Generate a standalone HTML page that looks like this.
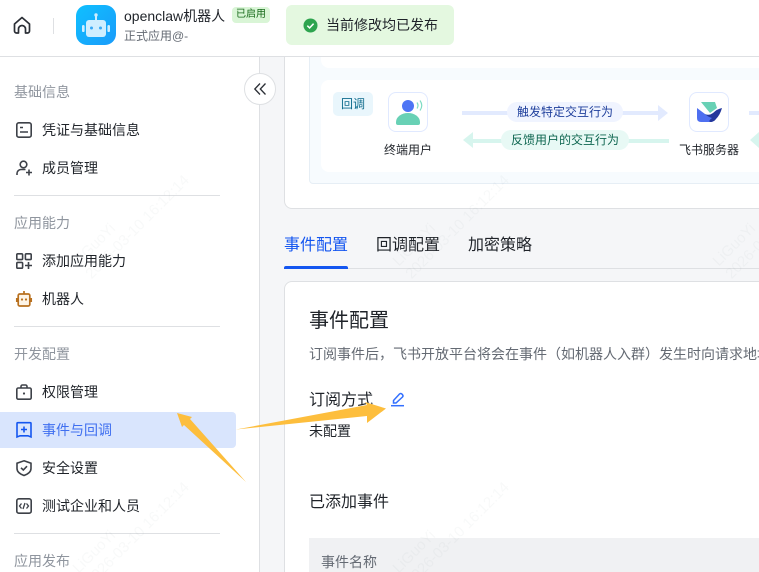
<!DOCTYPE html>
<html><head><meta charset="utf-8"><style>
*{box-sizing:border-box}
html,body{margin:0;padding:0;width:759px;height:572px;overflow:hidden;background:#f5f6f8;font-family:"Liberation Sans","Noto Sans CJK SC",sans-serif;color:#1f2329}
#r{position:relative;width:759px;height:572px;overflow:hidden;background:#f5f6f8}
.a{position:absolute;white-space:nowrap}
.g{font-size:14px;color:#8f959e;left:14px;line-height:18px}
.i{font-size:14px;left:42px;line-height:20px;color:#1f2329}
.d{left:14px;width:206px;height:1px;background:#dee0e3}
svg{position:absolute;overflow:visible}
.s{fill:none;stroke:#3d4148;stroke-width:1.6}
.wm{position:absolute;color:rgba(80,90,110,.04);font-size:15px;line-height:18px;transform:rotate(-45deg);transform-origin:0 100%;white-space:nowrap}
</style></head><body><div id="r">
<!-- main area -->
<div class="a" style="left:284px;top:50px;width:490px;height:159px;background:#fff;border:1px solid #dee0e3;border-radius:8px"></div>
<div class="a" style="left:309px;top:50px;width:470px;height:134px;background:#f7fbfe;border:1px solid #e6eef5;border-radius:4px"></div>
<div class="a" style="left:321px;top:50px;width:450px;height:18px;background:#fff;border-radius:8px"></div>
<div class="a" style="left:321px;top:80px;width:450px;height:92px;background:#fff;border-radius:8px"></div>
<div class="a" style="left:333px;top:92px;width:40px;height:24px;background:#e9f6fc;border-radius:5px;font-size:12px;line-height:24px;text-align:center;color:#0e6b8c">回调</div>
<div class="a" style="left:388px;top:92px;width:40px;height:40px;background:#fff;border:1px solid #e0e9ff;border-radius:8px"></div>
<svg style="left:388px;top:92px" width="40" height="40" viewBox="0 0 40 40"><circle cx="20" cy="14" r="6" fill="#4e75f5"/><path d="M8 30a12 9 0 0 1 24 0v1a2 2 0 0 1-2 2H10a2 2 0 0 1-2-2z" fill="#68d1b5"/><path d="M29 10.500q2 3 0 6M32 8.500q3.500 5 0 10" fill="none" stroke="#7fdcc4" stroke-width="1.200"/></svg>
<div class="a" style="left:384px;top:141px;font-size:12px;line-height:18px;color:#1f2329">终端用户</div>
<div class="a" style="left:462px;top:111px;width:196px;height:4px;background:#e2eafe"></div>
<svg style="left:658px;top:105px" width="10" height="16"><path d="M0 0L10 8L0 16z" fill="#e2eafe"/></svg>
<div class="a" style="left:507px;top:102px;width:116px;height:20px;background:#f0f4ff;border-radius:10px;font-size:12px;line-height:20px;text-align:center;color:#1f3f9c">触发特定交互行为</div>
<svg style="left:463px;top:132px" width="10" height="16"><path d="M10 0L0 8L10 16z" fill="#d7f5ee"/></svg>
<div class="a" style="left:473px;top:139px;width:196px;height:4px;background:#d7f5ee"></div>
<div class="a" style="left:501px;top:130px;width:128px;height:20px;background:#e8f9f5;border-radius:10px;font-size:12px;line-height:20px;text-align:center;color:#0e6650">反馈用户的交互行为</div>
<div class="a" style="left:689px;top:92px;width:40px;height:40px;background:#fff;border:1px solid #e0e9ff;border-radius:8px"></div>
<svg style="left:689px;top:92px" width="40" height="40" viewBox="0 0 40 40"><path d="M12 10H26L28 16 21 21z" fill="#68d1b5"/><path d="M8 16L16 22Q21 26 27 26L23 30H12Q8 30 8 26z" fill="#4e6ff0"/><path d="M16 22Q20 24 24 21 28 17 33 16 31 23 27 27 25 30 21 30 19 29 23 26 19 25 16 22z" fill="#24389c"/></svg>
<div class="a" style="left:679px;top:141px;font-size:12px;line-height:18px;color:#1f2329">飞书服务器</div>
<div class="a" style="left:749px;top:111px;width:10px;height:4px;background:#e2eafe"></div>
<svg style="left:750px;top:132px" width="9" height="16"><path d="M9 0L0 8L9 16z" fill="#d7f5ee"/></svg>
<!-- tabs -->
<div class="a" style="left:284px;top:236px;font-size:16px;line-height:20px;color:#1456f0">事件配置</div>
<div class="a" style="left:376px;top:236px;font-size:16px;line-height:20px">回调配置</div>
<div class="a" style="left:468px;top:236px;font-size:16px;line-height:20px">加密策略</div>
<div class="a" style="left:284px;top:268px;width:475px;height:1px;background:#dee0e3"></div>
<div class="a" style="left:284px;top:266px;width:64px;height:3px;background:#1456f0;border-radius:2px 2px 0 0"></div>
<!-- card -->
<div class="a" style="left:284px;top:281px;width:490px;height:300px;background:#fff;border:1px solid #dee0e3;border-radius:8px"></div>
<div class="a" style="left:309px;top:308px;font-size:20px;line-height:26px">事件配置</div>
<div class="a" style="left:309px;top:344px;font-size:14px;line-height:20px;color:#646a73">订阅事件后，飞书开放平台将会在事件（如机器人入群）发生时向请求地址</div>
<div class="a" style="left:309px;top:390px;font-size:16px;line-height:22px">订阅方式</div>
<svg style="left:390px;top:392px" width="16" height="16" viewBox="0 0 16 16"><path d="M3.500 11V8.500L9.500 2Q10.500 1 11.800 2L12.500 2.700Q13.500 3.800 12.500 5L6 11z" fill="none" stroke="#3370ff" stroke-width="1.500"/><path d="M1 13.700H14" stroke="#3370ff" stroke-width="1.500"/></svg>
<div class="a" style="left:309px;top:421px;font-size:14px;line-height:20px">未配置</div>
<div class="a" style="left:309px;top:492px;font-size:16px;line-height:22px">已添加事件</div>
<div class="a" style="left:309px;top:538px;width:450px;height:34px;background:#f0f1f3"></div>
<div class="a" style="left:321px;top:552px;font-size:14px;line-height:20px;color:#646a73">事件名称</div>
<!-- header -->
<div class="a" style="left:0;top:0;width:759px;height:57px;background:#fff;border-bottom:1px solid #dee0e3"></div>
<svg style="left:12px;top:15px" width="20" height="20" viewBox="0 0 20 20"><path d="M6.500 18H4.500a2 2 0 0 1-2-2V9L10 2.500 17.500 9v7a2 2 0 0 1-2 2h-2v-4a3.500 3.500 0 0 0-7 0z" fill="none" stroke="#2b2f36" stroke-width="1.700" stroke-linejoin="round"/></svg>
<div class="a" style="left:53px;top:18px;width:1px;height:16px;background:#dee0e3"></div>
<div class="a" style="left:76px;top:5px;width:40px;height:40px;border-radius:11px;background:linear-gradient(135deg,#0fc0ff,#1a9bfa)"></div>
<svg style="left:76px;top:5px" width="40" height="40" viewBox="0 0 40 40"><rect x="10" y="15" width="20" height="17" rx="3" fill="#cfeeff"/><rect x="19" y="10" width="2" height="6" fill="#cfeeff"/><circle cx="20" cy="10" r="1.700" fill="#cfeeff"/><rect x="6" y="20" width="2.600" height="7" rx="1.300" fill="#cfeeff"/><rect x="31.400" y="20" width="2.600" height="7" rx="1.300" fill="#cfeeff"/><circle cx="15.500" cy="23" r="1.500" fill="#3aa9f5"/><circle cx="24.500" cy="23" r="1.500" fill="#3aa9f5"/></svg>
<div class="a" style="left:124px;top:6px;font-size:14px;line-height:20px;color:#1f2329">openclaw机器人</div>
<div class="a" style="left:232px;top:7px;width:38px;height:16px;background:#d9f5d6;border-radius:4px;font-size:10px;line-height:16px;text-align:center;color:#186a1a">已启用</div>
<div class="a" style="left:124px;top:27px;font-size:12px;line-height:18px;color:#646a73">正式应用@-</div>
<div class="a" style="left:286px;top:5px;width:168px;height:40px;background:#e4f8e0;border-radius:6px"></div>
<svg style="left:303px;top:18px" width="15" height="15" viewBox="0 0 15 15"><circle cx="7.500" cy="7.500" r="7" fill="#2ea44f"/><path d="M4.300 7.700l2.300 2.200 4-4.200" fill="none" stroke="#fff" stroke-width="1.500"/></svg>
<div class="a" style="left:326px;top:15px;font-size:14px;line-height:20px;color:#1f2329">当前修改均已发布</div>
<!-- sidebar -->
<div class="a" style="left:0;top:57px;width:260px;height:515px;background:#fff;border-right:1px solid #dee0e3"></div>
<div class="a g" style="top:83px">基础信息</div>
<svg style="left:16px;top:122px" width="16" height="16" viewBox="0 0 16 16"><rect x=".8" y=".8" width="14.400" height="14.400" rx="2" class="s"/><path d="M4 5.500h3M4 10h8" class="s"/></svg>
<div class="a i" style="top:120px">凭证与基础信息</div>
<svg style="left:16px;top:160px" width="16" height="16" viewBox="0 0 16 16"><circle cx="7.500" cy="4.500" r="3.300" class="s"/><path d="M1 15v-1.500a4 4 0 0 1 4-4h4.500M10 12.500h6M13 9.500v6" class="s"/></svg>
<div class="a i" style="top:158px">成员管理</div>
<div class="a d" style="top:195px"></div>
<div class="a g" style="top:214px">应用能力</div>
<svg style="left:16px;top:253px" width="16" height="16" viewBox="0 0 16 16"><rect x=".8" y=".8" width="5.800" height="5.800" rx="1" class="s"/><rect x="9.400" y=".8" width="5.800" height="5.800" rx="1" class="s"/><rect x=".8" y="9.400" width="5.800" height="5.800" rx="1" class="s"/><path d="M9 12.500h7M12.500 9v7" class="s"/></svg>
<div class="a i" style="top:251px">添加应用能力</div>
<svg style="left:16px;top:291px" width="16" height="16" viewBox="0 0 16 16"><rect x="2.200" y="3" width="11.600" height="12" rx="1.500" fill="#fdf4e6" stroke="#b8701f" stroke-width="1.700"/><path d="M8 0v3M.8 7v4M15.200 7v4" stroke="#b8701f" stroke-width="1.700"/><circle cx="6" cy="8.500" r="1.100" fill="#b8701f"/><circle cx="10" cy="8.500" r="1.100" fill="#b8701f"/></svg>
<div class="a i" style="top:289px">机器人</div>
<div class="a d" style="top:326px"></div>
<div class="a g" style="top:345px">开发配置</div>
<svg style="left:16px;top:384px" width="16" height="16" viewBox="0 0 16 16"><rect x=".8" y="4" width="14.400" height="11.200" rx="1.500" class="s"/><path d="M5 4V2.500A1.500 1.500 0 0 1 6.500 1h3A1.500 1.500 0 0 1 11 2.500V4" class="s"/><circle cx="8" cy="9.500" r="1.100" fill="#3d4148"/></svg>
<div class="a i" style="top:382px">权限管理</div>
<div class="a" style="left:0;top:412px;width:236px;height:36px;background:#d9e5fd;border-radius:0 4px 4px 0"></div>
<svg style="left:16px;top:422px" width="16" height="16" viewBox="0 0 16 16"><path d="M1 1.500q0-.8.800-.8h12.400q.8 0 .8.800V15l-3-1.200H4L1 15zM5 7.500h6M8 4.500v6" fill="none" stroke="#1456f0" stroke-width="1.600"/></svg>
<div class="a i" style="top:420px;color:#3f6ff0">事件与回调</div>
<svg style="left:16px;top:460px" width="16" height="16" viewBox="0 0 16 16"><path d="M8 .8l7 2.400v5.300q0 4.500-7 7-7-2.500-7-7V3.200zM5 7.800l2.300 2.200 3.700-3.800" class="s"/></svg>
<div class="a i" style="top:458px">安全设置</div>
<svg style="left:16px;top:498px" width="16" height="16" viewBox="0 0 16 16"><rect x=".8" y=".8" width="14.400" height="14.400" rx="2" class="s"/><path d="M5.500 5.500L3.500 8l2 2.500M10.500 5.500l2 2.500-2 2.500M9 5l-2 6" fill="none" stroke="#3d4148" stroke-width="1.300"/></svg>
<div class="a i" style="top:496px">测试企业和人员</div>
<div class="a d" style="top:533px"></div>
<div class="a g" style="top:552px">应用发布</div>
<!-- collapse -->
<div class="a" style="left:244px;top:73px;width:32px;height:32px;background:#fff;border:1px solid #dee0e3;border-radius:50%"></div>
<svg style="left:254px;top:83px" width="12" height="12" viewBox="0 0 12 12"><path d="M6 .5L.8 6 6 11.500M11.500 .5L6.300 6l5.200 5.500" fill="none" stroke="#2b2f36" stroke-width="1.300"/></svg>
<!-- watermarks -->
<div class="wm" style="left:95px;top:247px">LiGuoYi<br>2026-03-10 16:12:14</div>
<div class="wm" style="left:415px;top:247px">LiGuoYi<br>2026-03-10 16:12:14</div>
<div class="wm" style="left:735px;top:247px">LiGuoYi<br>2026-03-10 16:12:14</div>
<div class="wm" style="left:95px;top:554px">LiGuoYi<br>2026-03-10 16:12:14</div>
<div class="wm" style="left:415px;top:554px">LiGuoYi<br>2026-03-10 16:12:14</div>
<!-- arrows -->
<svg style="left:0;top:0" width="759" height="572"><path d="M236 429.500L367 405 365 402 386 408.500 367 423 367 416z" fill="#fdbe3d"/><path d="M246 482L190 419 192 417 177 413 182 427 184 425z" fill="#fdbe3d"/></svg>
</div></body></html>
